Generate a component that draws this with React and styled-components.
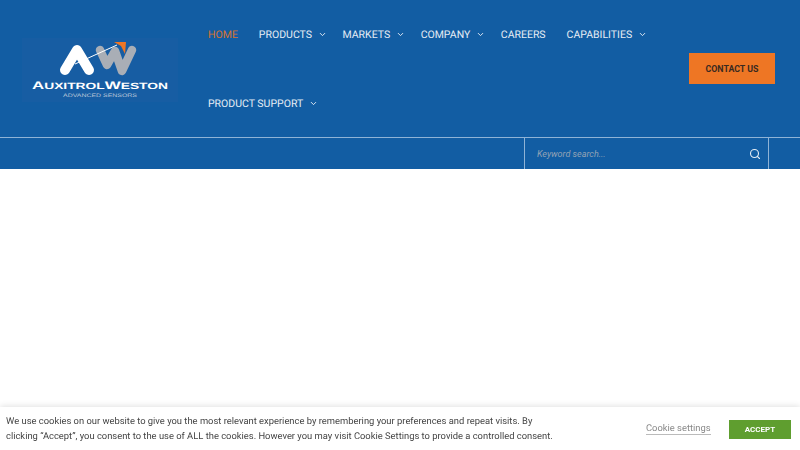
import React from "react";
import styled, { createGlobalStyle } from "styled-components";
import { ChevronDown, Search } from "lucide-react";

const GlobalStyle = createGlobalStyle`
	html, body {
		margin: 0;
		padding: 0;
		height: 100%;
		overflow: hidden;
		background: #fff;
		font-family: Roboto, "Liberation Sans", sans-serif;
		text-rendering: geometricPrecision;
	}
`;

const navItems = [
	{ label: "HOME", active: true },
	{ label: "PRODUCTS", arrow: true },
	{ label: "MARKETS", arrow: true },
	{ label: "COMPANY", arrow: true },
	{ label: "CAREERS" },
	{ label: "CAPABILITIES", arrow: true },
	{ label: "PRODUCT SUPPORT", arrow: true },
];

const Logo = () => (
	<LogoSvg viewBox="0 0 160 70" aria-label="Auxitrol Weston">
		<rect x="2" y="4" width="156" height="64" fill="#175da3" />
		<path d="M80 16 L87 31 L95 17 L102 37 L112 16" fill="none" stroke="#a9aeb6" strokeWidth="8.5" strokeLinecap="round" strokeLinejoin="round" />
		<path d="M45 36 L57 16 L69 36" fill="none" stroke="#fff" strokeWidth="10" strokeLinecap="round" strokeLinejoin="round" />
		<path d="M55 30 L97 11" stroke="#fff" strokeWidth="1" />
		<path d="M94 8 L106 8 L105 20 L101 12 Z" fill="#ee7624" />
		<LogoName x="80" y="55" textAnchor="middle" textLength="136" lengthAdjust="spacingAndGlyphs">
			A<LogoSmall>UXITROL</LogoSmall>W<LogoSmall>ESTON</LogoSmall>
		</LogoName>
		<LogoTag x="80" y="62.5" textAnchor="middle" textLength="74" lengthAdjust="spacingAndGlyphs">
			ADVANCED SENSORS
		</LogoTag>
	</LogoSvg>
);

const App = () => {
	return (
		<Page>
			<GlobalStyle />
			<Header>
				<LogoBox>
					<Logo />
				</LogoBox>
				<Nav>
					{navItems.map((item) => (
						<NavItem key={item.label} $active={item.active} $arrow={item.arrow}>
							{item.label}
							{item.arrow && <ChevronDown size={9} strokeWidth={2.5} />}
						</NavItem>
					))}
				</Nav>
				<ContactBox>
					<ContactButton>CONTACT US</ContactButton>
				</ContactBox>
			</Header>
			<SearchBar>
				<SearchBox>
					<SearchInput placeholder="Keyword search..." />
					<Search size={12} strokeWidth={2.2} color="#e6edf5" />
				</SearchBox>
			</SearchBar>
			<CookieBar>
				<CookieText>
					We use cookies on our website to give you the most relevant experience by remembering your preferences and repeat visits. By clicking “Accept”, you consent to the use of ALL the cookies. However you may visit Cookie Settings to provide a controlled consent.
				</CookieText>
				<CookieLink>Cookie settings</CookieLink>
				<AcceptButton>ACCEPT</AcceptButton>
			</CookieBar>
		</Page>
	);
};

export default App;

const Page = styled.div`
	width: 800px;
	height: 450px;
	overflow: hidden;
	background: #fff;
`;
const Header = styled.header`
	display: flex;
	height: 137px;
	background: #125da3;
`;
const LogoBox = styled.div`
	width: 198px;
	flex: none;
	display: flex;
	align-items: center;
	padding: 0 0 0 20px;
	box-sizing: border-box;
`;
const LogoSvg = styled.svg`
	width: 160px;
	height: 70px;
	display: block;
`;
const LogoName = styled.text`
	font-family: "Liberation Sans", sans-serif;
	font-weight: 700;
	font-size: 11px;
	fill: #fff;
`;
const LogoSmall = styled.tspan`
	font-size: 9px;
`;
const LogoTag = styled.text`
	font-family: "Liberation Sans", sans-serif;
	font-size: 5px;
	fill: #b9c6d8;
`;
const Nav = styled.nav`
	width: 480px;
	flex: none;
	display: flex;
	flex-wrap: wrap;
	align-content: flex-start;
`;
const NavItem = styled.a`
	height: 68.5px;
	box-sizing: border-box;
	display: flex;
	align-items: center;
	padding: 1px ${(p) => (p.$arrow ? "5.5px" : "11px")} 0 10px;
	gap: 6px;
	font-size: 10.5px;
	color: ${(p) => (p.$active ? "#d9742f" : "#e6edf5")};
`;
const ContactBox = styled.div`
	flex: 1;
	display: flex;
	align-items: flex-start;
	padding: 53px 0 0 11px;
`;
const ContactButton = styled.button`
	width: 86px;
	height: 31px;
	border: 0;
	padding: 1px 0 0;
	background: #ee7624;
	color: #3a2a20;
	font-family: Roboto, sans-serif;
	font-weight: 700;
	font-size: 8.8px;
`;
const SearchBar = styled.div`
	height: 31px;
	border-top: 1px solid #8fb3d6;
	background: #125da3;
	display: flex;
	justify-content: flex-end;
	padding-right: 31px;
`;
const SearchBox = styled.div`
	width: 245px;
	display: flex;
	align-items: center;
	padding: 0 7px 0 12px;
	box-sizing: border-box;
	border-left: 1px solid #8fb3d6;
	border-right: 1px solid #8fb3d6;
`;
const SearchInput = styled.input`
	flex: 1;
	min-width: 0;
	border: 0;
	padding: 0;
	outline: none;
	background: transparent;
	font-family: Roboto, sans-serif;
	font-style: italic;
	font-size: 9px;
	&::placeholder {
		color: #93a3b5;
		opacity: 1;
	}
`;
const CookieBar = styled.div`
	position: fixed;
	left: 0;
	right: 0;
	bottom: 0;
	height: 43px;
	box-sizing: border-box;
	display: flex;
	align-items: center;
	padding: 1px 9px 0 6px;
	background: #fff;
	box-shadow: 0 -1px 6px rgba(0, 0, 0, 0.12);
`;
const CookieText = styled.p`
	width: 552px;
	margin: 0;
	flex: none;
	font-size: 9.4px;
	line-height: 15px;
	color: #444;
`;
const CookieLink = styled.a`
	margin-left: 88px;
	font-size: 9.4px;
	color: #888;
	border-bottom: 1px solid #bbb;
`;
const AcceptButton = styled.button`
	margin-left: auto;
	width: 62px;
	height: 19px;
	border: 0;
	padding: 0;
	background: #5f9e2f;
	color: #fff;
	font-family: Roboto, sans-serif;
	font-weight: 700;
	font-size: 8px;
`;
